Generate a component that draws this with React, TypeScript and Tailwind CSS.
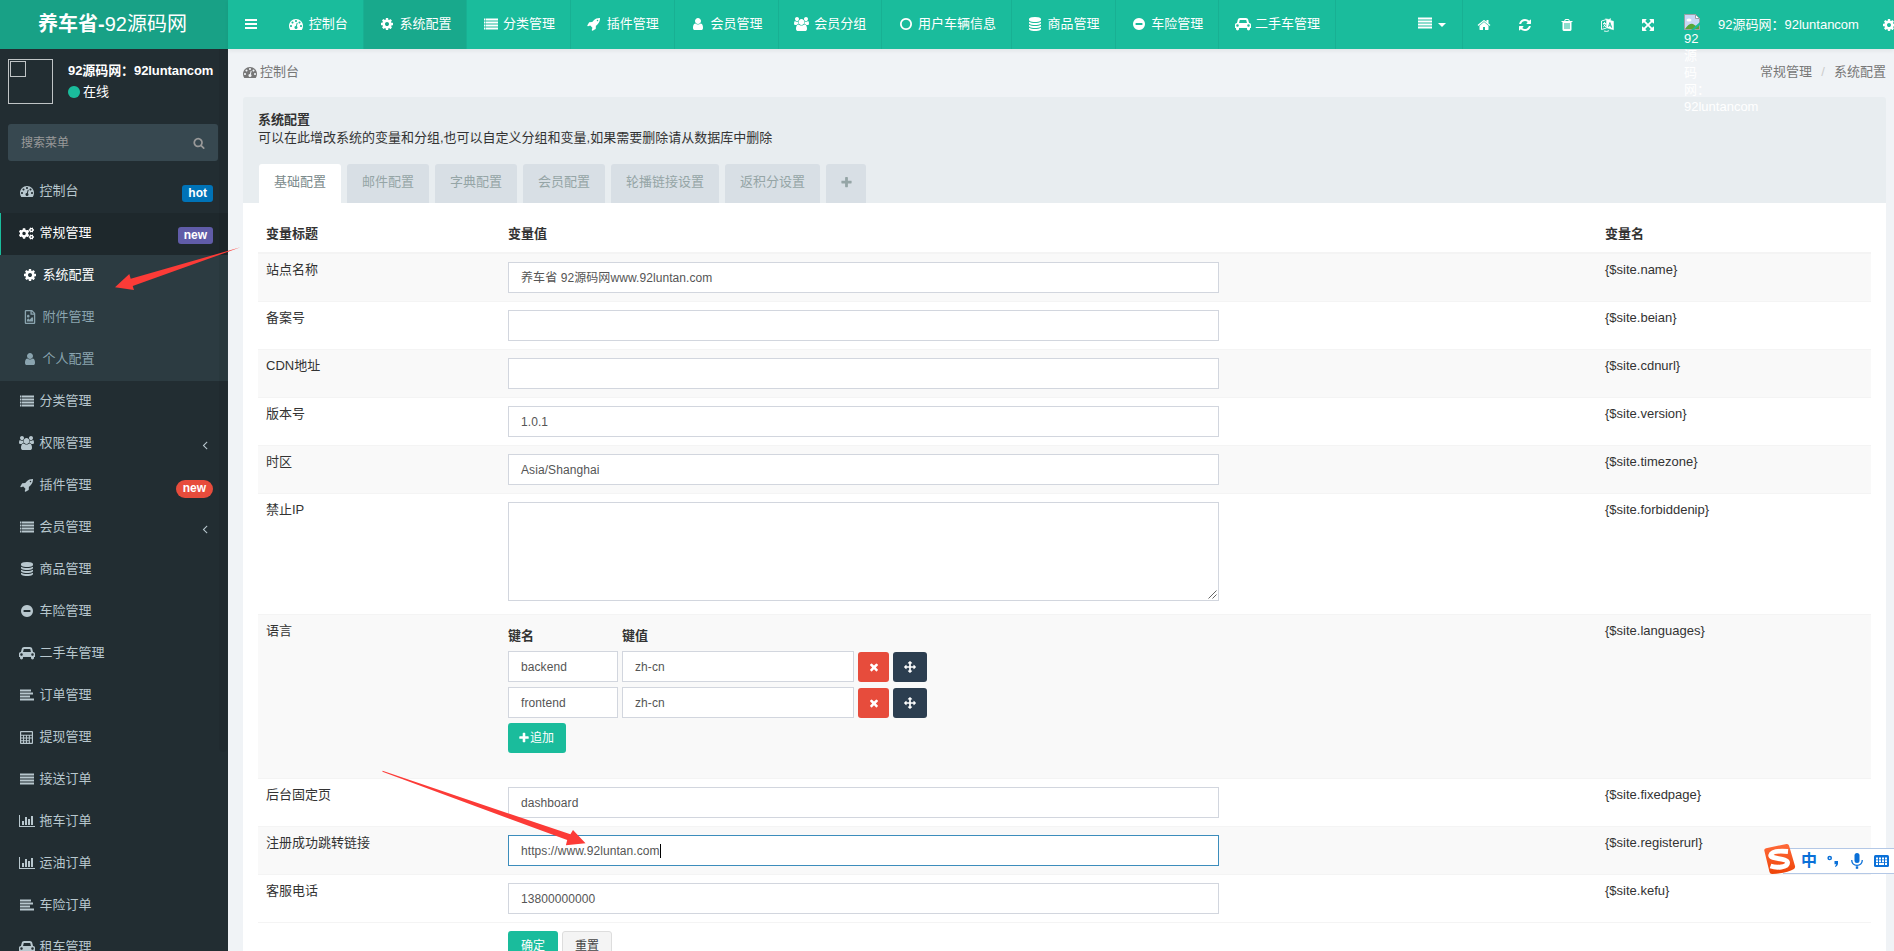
import React from "react";
import { FaCogs, FaRegFileImage } from "react-icons/fa";

const DOT = "q0-53-37.5-90.5t-90.5-37.5-90.5 37.5-37.5 90.5 37.5 90.5 90.5 37.5 90.5-37.5 37.5-90.5z";
const LAYER = "q237 0 443-43t325-127v170q0 69-103 128t-280 93.5-385 34.5-385-34.5-280-93.5-103-128v-170q119 84 325 127t443 43z";
const DISC = "q0 209-103 385.5t-279.5 279.5-385.5 103-385.5-103-279.5-279.5-103-385.5 103-385.5 279.5-279.5 385.5-103 385.5 103 279.5 279.5 103 385.5z";
const SLOT = "v-704q0-14-9-23t-23-9h-64q-14 0-23 9t-9 23v704q0 14 9 23t23 9h64q14 0 23-9t9-23z";

type Glyph = { d: string; x?: number; w?: number };

const glyphs: Record<string, Glyph> = {
  bars: { d: "M128 256h1536v256H128zM128 768h1536v256H128zM128 1280h1536v256H128z" },
  list: { d: "M0 192h192v256H0zM256 192h1536v256H256zM0 576h192v256H0zM256 576h1536v256H256zM0 960h192v256H0zM256 960h1536v256H256zM0 1344h192v256H0zM256 1344h1536v256H256z" },
  alignLeft: { d: "M0 192h1408v256H0zM0 576h1664v256H0zM0 960h1280v256H0zM0 1344h1792v256H0z" },
  alignJustify: { d: "M0 192h1792v256H0zM0 576h1792v256H0zM0 960h1792v256H0zM0 1344h1792v256H0z" },
  calculator: { d: "M128 0h1536q128 0 128 128v1536q0 128-128 128H128q-128 0-128-128V128Q0 0 128 0zM160 160v350h1472V160zM160 640v260h260V640zM560 640v260h260V640zM960 640v260h260V640zM1360 640v260h272V640zM160 1020v260h260v-260zM560 1020v260h260v-260zM960 1020v260h260v-260zM1360 1020v612h272v-612zM160 1400v232h260v-232zM560 1400v232h260v-232zM960 1400v232h260v-232z" },
  cog: { d: "M1152 896q0-106-75-181t-181-75-181 75-75 181 75 181 181 75 181-75 75-181zm512-109v222q0 12-8 23t-20 13l-185 28q-19 54-39 91 35 50 107 138 10 12 10 25t-9 23q-27 37-99 108t-94 71q-12 0-26-9l-138-108q-44 23-91 38-16 136-29 186-7 28-36 28h-222q-14 0-24.5-8.5t-11.5-21.5l-28-184q-49-16-90-37l-141 107q-10 9-25 9-14 0-25-11-126-114-165-168-7-10-7-23 0-12 8-23 15-21 51-66.5t54-70.5q-27-50-41-99l-183-27q-13-2-21-12.5t-8-23.5v-222q0-12 8-23t19-13l186-28q14-46 39-92-40-57-107-138-10-12-10-24 0-10 9-23 26-36 98.5-107.5t94.5-71.5q13 0 26 10l138 107q44-23 91-38 16-136 29-186 7-28 36-28h222q14 0 24.5 8.5t11.5 21.5l28 184q49 16 90 37l142-107q9-9 24-9 13 0 25 10 129 119 165 170 7 8 7 22 0 12-8 23-15 21-51 66.5t-54 70.5q26 50 41 98l183 28q13 2 21 12.5t8 23.5z" },
  user: { d: "M1536 1399q0 109-62.5 187t-150.5 78h-854q-88 0-150.5-78t-62.5-187q0-85 8.5-160.5t31.5-152 58.5-131 94-89 134.5-34.5q131 128 313 128t313-128q76 0 134.5 34.5t94 89 58.5 131 31.5 152 8.5 160.5zm-256-887q0 159-112.5 271.5t-271.5 112.5-271.5-112.5-112.5-271.5 112.5-271.5 271.5-112.5 271.5 112.5 112.5 271.5z" },
  users: { x: 64, w: 1920, d: "M657 896q-162 5-265 128h-134q-82 0-138-40.5t-56-118.5q0-353 124-353 6 0 43.5 21t97.5 42.5 119 21.5q67 0 133-23-5 37-5 66 0 139 81 256zm1071 637q0 120-73 189.5t-194 69.5h-874q-121 0-194-69.5t-73-189.5q0-53 3.5-103.5t14-109 26.5-108.5 43-97.5 62-81 85.5-53.5 111.5-20q10 0 43 21.5t73 48 107 48 135 21.5 135-21.5 107-48 73-48 43-21.5q61 0 111.5 20t85.5 53.5 62 81 43 97.5 26.5 108.5 14 109 3.5 103.5zm-1024-1277q0 106-75 181t-181 75-181-75-75-181 75-181 181-75 181 75 75 181zm704 384q0 159-112.5 271.5t-271.5 112.5-271.5-112.5-112.5-271.5 112.5-271.5 271.5-112.5 271.5 112.5 112.5 271.5zm576 225q0 78-56 118.5t-138 40.5h-134q-103-123-265-128 81-117 81-256 0-29-5-66 66 23 133 23 59 0 119-21.5t97.5-42.5 43.5-21q124 0 124 353zm-128-609q0 106-75 181t-181 75-181-75-75-181 75-181 181-75 181 75 75 181z" },
  dashboard: { d: "M384 1152" + DOT + "m192-448" + DOT + "m428 481l101-382q6-26-7.5-48.5t-38.5-29.5-48 6.5-30 39.5l-101 382q-60 5-107 43.5t-63 98.5q-20 77 20 146t117 89 146-20 89-117q16-60-6-117t-72-91zm660-33" + DOT + "m-640-640" + DOT + "m448 192" + DOT + "m320 448q0 261-141 483-19 29-54 29h-1402q-35 0-54-29-141-221-141-483 0-182 71-348t191-286 286-191 348-71 348 71 286 191 191 286 71 348z" },
  home: { d: "M1472 992v480q0 26-19 45t-45 19h-384v-384h-256v384h-384q-26 0-45-19t-19-45v-480q0-1 .5-3t.5-3l575-474 575 474q1 2 1 6zm223-69l-62 74q-8 9-21 11h-3q-13 0-21-7l-692-577-692 577q-12 8-24 7-13-2-21-11l-62-74q-8-10-7-23.5t11-21.5l719-599q32-26 76-26t76 26l244 204v-195q0-14 9-23t23-9h192q14 0 23 9t9 23v408l219 182q10 8 11 21.5t-7 23.5z" },
  trash: { d: "M704 1376" + SLOT + "m256 0" + SLOT + "m256 0" + SLOT + "m-544-992h448l-48-117q-7-9-17-11h-317q-10 2-17 11zm928 32v64q0 14-9 23t-23 9h-96v948q0 83-47 143.5t-113 60.5h-832q-66 0-113-58.5t-47-141.5v-952h-96q-14 0-23-9t-9-23v-64q0-14 9-23t23-9h309l70-167q15-37 54-63t79-26h320q40 0 79 26t54 63l70 167h309q14 0 23 9t9 23z" },
  refresh: { d: "M1639 1056q0 5-1 7-64 268-268 434.5t-478 166.5q-146 0-282.5-55t-243.5-157l-129 129q-19 19-45 19t-45-19-19-45v-448q0-26 19-45t45-19h448q26 0 45 19t19 45-19 45l-137 137q71 66 161 102t187 36q134 0 250-65t186-179q11-17 53-117 8-23 30-23h192q13 0 22.5 9.5t9.5 22.5zm25-800v448q0 26-19 45t-45 19h-448q-26 0-45-19t-19-45 19-45l138-138q-148-137-349-137-134 0-250 65t-186 179q-11 17-53 117-8 23-30 23h-199q-13 0-22.5-9.5t-9.5-22.5v-7q65-268 270-434.5t480-166.5q146 0 284 55.5t245 156.5l130-129q19-19 45-19t45 19 19 45z" },
  expand: { d: "M1411 541l-355 355 355 355 144-144q29-31 70-14 39 17 39 59v448q0 26-19 45t-45 19h-448q-42 0-59-40-17-39 14-69l144-144-355-355-355 355 144 144q31 30 14 69-17 40-59 40h-448q-26 0-45-19t-19-45v-448q0-42 40-59 39-17 69 14l144 144 355-355-355-355-144 144q-19 19-45 19-12 0-24-5-40-17-40-59v-448q0-26 19-45t45-19h448q42 0 59 40 17 39-14 69l-144 144 355 355 355-355-144-144q-31-30-14-69 17-40 59-40h448q26 0 45 19t19 45v448q0 42-39 59-13 5-25 5-26 0-45-19z" },
  move: { d: "M1792 896q0 26-19 45l-256 256q-19 19-45 19t-45-19-19-45v-128h-384v384h128q26 0 45 19t19 45-19 45l-256 256q-19 19-45 19t-45-19l-256-256q-19-19-19-45t19-45 45-19h128v-384h-384v128q0 26-19 45t-45 19-45-19l-256-256q-19-19-19-45t19-45l256-256q19-19 45-19t45 19 19 45v128h384v-384h-128q-26 0-45-19t-19-45 19-45l256-256q19-19 45-19t45 19l256 256q19 19 19 45t-19 45-45 19h-128v384h384v-128q0-26 19-45t45-19 45 19l256 256q19 19 19 45z" },
  times: { d: "M1490 1322q0 40-28 68l-136 136q-28 28-68 28t-68-28l-294-294-294 294q-28 28-68 28t-68-28l-136-136q-28-28-28-68t28-68l294-294-294-294q-28-28-28-68t28-68l136-136q28-28 68-28t68 28l294 294 294-294q28-28 68-28t68 28l136 136q28 28 28 68t-28 68l-294 294 294 294q28 28 28 68z" },
  plus: { d: "M1600 736v192q0 40-28 68t-68 28h-416v416q0 40-28 68t-68 28h-192q-40 0-68-28t-28-68v-416h-416q-40 0-68-28t-28-68v-192q0-40 28-68t68-28h416v-416q0-40 28-68t68-28h192q40 0 68 28t28 68v416h416q40 0 68 28t28 68z" },
  search: { d: "M1216 832q0-185-131.5-316.5t-316.5-131.5-316.5 131.5-131.5 316.5 131.5 316.5 316.5 131.5 316.5-131.5 131.5-316.5zm512 832q0 52-38 90t-90 38q-54 0-90-38l-343-342q-179 124-399 124-143 0-273.5-55.5t-225-150-150-225-55.5-273.5 55.5-273.5 150-225 225-150 273.5-55.5 273.5 55.5 225 150 150 225 55.5 273.5q0 220-124 399l343 343q37 37 37 90z" },
  minus: { d: "M1344 960v-128q0-26-19-45t-45-19h-768q-26 0-45 19t-19 45v128q0 26 19 45t45 19h768q26 0 45-19t19-45zm320-64" + DISC },
  circleO: { d: "M896 352q-148 0-273 73t-198 198-73 273 73 273 198 198 273 73 273-73 198-198 73-273-73-273-198-198-273-73zm768 544" + DISC },
  circle: { d: "M1664 896" + DISC },
  database: { d: "M896 768" + LAYER + "m0 768" + LAYER + "m0-384" + LAYER + "m0-1152q208 0 385 34.5t280 93.5 103 128v128q0 69-103 128t-280 93.5-385 34.5-385-34.5-280-93.5-103-128v-128q0-69 103-128t280-93.5 385-34.5z" },
  rocket: { d: "M1440 448q0-40-28-68t-68-28-68 28-28 68 28 68 68 28 68-28 28-68zm224-288q0 249-75.5 430.5t-253.5 360.5q-81 80-195 176l-20 379q-2 16-16 26l-384 224q-7 4-16 4-12 0-23-9l-64-64q-13-14-8-32l85-276-281-281-276 85q-3 1-9 1-14 0-23-9l-64-64q-17-19-5-39l224-384q10-14 26-16l379-20q96-114 176-195 188-187 358-258t431-71q14 0 24 9.5t10 22.5z" },
  car: { w: 2048, d: "M480 1088q0-66-47-113t-113-47-113 47-47 113 47 113 113 47 113-47 47-113zm36-320h1016l-89-357q-2-8-14-17.5t-21-9.5h-768q-9 0-21 9.5t-14 17.5zm1372 320q0-66-47-113t-113-47-113 47-47 113 47 113 113 47 113-47 47-113zm160-96v384q0 14-9 23t-23 9h-96v128q0 80-56 136t-136 56-136-56-56-136v-128h-1024v128q0 80-56 136t-136 56-136-56-56-136v-128h-96q-14 0-23-9t-9-23v-384q0-93 65.5-158.5t158.5-65.5h28l105-419q23-94 104-157.5t179-63.5h768q98 0 179 63.5t104 157.5l105 419h28q93 0 158.5 65.5t65.5 158.5z" },
  chart: { w: 2048, d: "M640 896v512h-256v-512h256zm384-512v1024h-256v-1024h256zm1024 1152v128h-2048v-1536h128v1408h1920zm-640-896v768h-256v-768h256zm384-384v1152h-256v-1152h256z" },
  angle: { d: "M1203 544q0 13-10 23l-393 393 393 393q10 10 10 23t-10 23l-50 50q-10 10-23 10t-23-10l-466-466q-10-10-10-23t10-23l466-466q10-10 23-10t23 10l50 50q10 10 10 23z" },
};

function Icon({ name, size = 14, className = "" }: { name: string; size?: number; className?: string }) {
  if (name === "cogs") return <FaCogs size={size + 1} className={"shrink-0 " + className} />;
  if (name === "image") return <FaRegFileImage size={size} className={"shrink-0 " + className} />;
  const g = glyphs[name];
  const w = g.w ?? 1792;
  return (
    <svg
      width={(size * w) / 1792}
      height={size}
      viewBox={`${g.x ?? 0} 0 ${w} 1792`}
      fill="currentColor"
      fillRule={name === "calculator" ? "evenodd" : "nonzero"}
      className={"shrink-0 " + className}
    >
      <path d={g.d} />
    </svg>
  );
}

const navItems = [
  { icon: "dashboard", label: "控制台" },
  { icon: "cog", label: "系统配置", active: true },
  { icon: "list", label: "分类管理" },
  { icon: "rocket", label: "插件管理" },
  { icon: "user", label: "会员管理" },
  { icon: "users", label: "会员分组" },
  { icon: "circleO", label: "用户车辆信息" },
  { icon: "database", label: "商品管理" },
  { icon: "minus", label: "车险管理" },
  { icon: "car", label: "二手车管理" },
];

const subMenu = [
  { icon: "cog", label: "系统配置", active: true },
  { icon: "image", label: "附件管理" },
  { icon: "user", label: "个人配置" },
];

const menu: { icon: string; label: string; arrow?: boolean; badge?: boolean }[] = [
  { icon: "list", label: "分类管理" },
  { icon: "users", label: "权限管理", arrow: true },
  { icon: "rocket", label: "插件管理", badge: true },
  { icon: "list", label: "会员管理", arrow: true },
  { icon: "database", label: "商品管理" },
  { icon: "minus", label: "车险管理" },
  { icon: "car", label: "二手车管理" },
  { icon: "alignLeft", label: "订单管理" },
  { icon: "calculator", label: "提现管理" },
  { icon: "alignJustify", label: "接送订单" },
  { icon: "chart", label: "拖车订单" },
  { icon: "chart", label: "运油订单" },
  { icon: "alignLeft", label: "车险订单" },
  { icon: "car", label: "租车管理" },
];

const tabs = ["基础配置", "邮件配置", "字典配置", "会员配置", "轮播链接设置", "返积分设置"];

function MenuLabel({ icon, label }: { icon: string; label: string }) {
  return (
    <>
      <span className="flex w-5 justify-center">
        <Icon name={icon} size={icon === "calculator" ? 13 : 14} />
      </span>
      <span className="ml-[3px]">{label}</span>
    </>
  );
}

function Sidebar() {
  return (
    <aside className="relative flex w-[228px] shrink-0 flex-col bg-[#222d32] text-[#b8c7ce]">
      <div className="flex h-[49px] shrink-0 items-center justify-center bg-[#18a186] pb-px pr-[3px] text-xl text-white">
        <b>养车省-</b>92源码网
      </div>
      <div className="flex h-[75px] shrink-0 pl-2 pt-[10px] text-white">
        <div className="h-[45px] w-[45px] border border-[#c0c4c6] p-px">
          <div className="h-4 w-4 border border-[#c0c4c6]" />
        </div>
        <div className="ml-[15px] flex flex-col whitespace-nowrap">
          <div className="mt-px h-[21px] text-[13px] font-bold leading-[21px] tracking-[-0.08px]">92源码网：92luntancom</div>
          <div className="flex h-[22px] items-center gap-[2px]">
            <Icon name="circle" className="-ml-px text-[#1abc9c]" />
            <span>在线</span>
          </div>
        </div>
      </div>
      <div className="ml-2 flex h-[37px] w-[210px] shrink-0 items-center justify-between rounded-[3px] bg-[#374850] pl-[13px] pr-[13px] text-xs text-[#999]">
        <span>搜索菜单</span>
        <Icon name="search" size={12} />
      </div>
      <div className="mt-[10px] flex h-[42px] shrink-0 items-center pb-[2px] pl-[16.5px] pr-[15px]">
        <MenuLabel icon="dashboard" label="控制台" />
        <span className="ml-auto mt-[5px] h-[17px] rounded-[3px] bg-[#0073b7] px-1.5 text-xs font-bold leading-4 text-white">hot</span>
      </div>
      <div className="flex h-[42px] shrink-0 items-center border-l border-[#1abc9c] bg-[#1e282c] pb-[2px] pl-[15.5px] pr-[15px] text-white">
        <MenuLabel icon="cogs" label="常规管理" />
        <span className="ml-auto mt-[5px] h-[17px] rounded-[3px] bg-[#605ca8] px-1.5 text-xs font-bold leading-4 text-white">new</span>
      </div>
      <div className="shrink-0 bg-[#2c3b41]">
        {subMenu.map((m) => (
          <div key={m.label} className={"flex h-[42px] items-center pb-[2px] pl-[19.5px] " + (m.active ? "text-white" : "text-[#8aa4af]")}>
            <MenuLabel icon={m.icon} label={m.label} />
          </div>
        ))}
      </div>
      {menu.map((m, i) => (
        <div key={i} className="flex h-[42px] shrink-0 items-center pb-[2px] pl-[16.5px] pr-[15px]">
          <MenuLabel icon={m.icon} label={m.label} />
          {m.arrow && <Icon name="angle" size={14} className="ml-auto mr-px mt-[3px]" />}
          {m.badge && (
            <span className="ml-auto mt-[7px] h-[18px] rounded-full bg-[#e74c3c] px-[7px] text-xs font-bold leading-[17px] text-white">new</span>
          )}
        </div>
      ))}
      <div className="absolute left-[219px] top-[49px] h-[703px] w-2 rounded-b bg-black/5" />
    </aside>
  );
}

function BrokenImage() {
  return (
    <svg width="16" height="16" viewBox="0 0 16 16">
      <path d="M.5.5h11l4 4v11H.5z" fill="#c9d8f5" stroke="#9aa0a6" />
      <path d="M11.5.5v4h4z" fill="#fff" stroke="#9aa0a6" />
      <ellipse cx="5" cy="6" rx="2.5" ry="1.5" fill="#fff" />
      <path d="M1 15q4-6 8-5l3 2 3-1v4z" fill="#5aa637" />
      <path d="M16 8L7 16h3l6-5z" fill="#1abc9c" />
    </svg>
  );
}

function TopBar() {
  return (
    <header className="relative z-10 flex h-[49px] shrink-0 items-stretch overflow-visible bg-[#1abc9c] text-white shadow-[0_2px_4px_rgba(0,0,0,0.06)]">
      <div className="flex w-[45px] shrink-0 items-center justify-center pb-[2px]">
        <Icon name="bars" size={14} />
      </div>
      {navItems.map((n) => (
        <div
          key={n.label}
          className={
            "flex shrink-0 items-center whitespace-nowrap border-r border-[#18b093] px-[15px] pb-[2px] " +
            (n.active ? "bg-[#18a98c]" : "")
          }
        >
          <span className="mr-1 flex w-[16.7px] justify-center">
            <Icon name={n.icon} />
          </span>
          {n.label}
        </div>
      ))}
      <div className="ml-auto flex w-[558px] shrink-0 overflow-hidden">
        <div className="flex w-[127px] shrink-0 items-center justify-end gap-[6px] border-r border-[#18b093] pb-[3px] pr-[16px]">
          <Icon name="alignJustify" size={14} />
          <svg width="8" height="4" viewBox="0 0 8 4" className="mt-1" fill="currentColor">
            <path d="M0 0h8L4 4z" />
          </svg>
        </div>
        <div className="flex shrink-0 items-center">
          <span className="flex w-[41px] justify-center"><Icon name="home" /></span>
          <span className="flex w-[42px] justify-center"><Icon name="refresh" /></span>
          <span className="flex w-[41px] justify-center"><Icon name="trash" /></span>
          <span className="flex w-[40px] justify-center">
            <svg width="13" height="14" viewBox="0 0 13 14" fill="none" stroke="currentColor">
              <path d="M5.500 1.500L.5 3v8.500l5-1.500M2 5.500h3M3.500 4v1.500M2.200 9q2-1 2.300-3.200M2.500 6.500L5 9M3 13q3 1 5-.3" strokeWidth=".9" />
              <path d="M5.500 1.800L4.500.8l3.500.7 1.500-1v2l3 .8v8.500l-7-2z" fill="currentColor" strokeWidth=".5" />
              <path d="M7.500 8.800l1.400-4.300 1.800 5.200M8.200 7.500l2 .6" stroke="#1abc9c" strokeWidth=".9" />
            </svg>
          </span>
          <span className="flex w-[42px] justify-center"><Icon name="expand" /></span>
        </div>
        <div className="ml-[49px] flex shrink-0 items-center">92源码网：92luntancom</div>
        <div className="ml-[23px] flex shrink-0 items-center"><Icon name="cog" /></div>
      </div>
      <div className="absolute left-[1456px] top-[14px] w-[80px] text-[13px] leading-[17px]">
        <BrokenImage />
        <div>92<br />源<br />码<br />网：<br />92luntancom</div>
      </div>
    </header>
  );
}

function Field({ value = "", className = "w-[711px] border-[#d2d6de]", caret = false }: { value?: string; className?: string; caret?: boolean }) {
  return (
    <div className={"flex h-[31px] shrink-0 items-center border bg-white pl-3 pt-px text-xs tracking-[0.08px] text-[#555] " + className}>
      {value}
      {caret && <span className="h-[14px] w-px bg-black" />}
    </div>
  );
}

function Row({ label, name, children, striped, height = "h-12" }: { label: string; name: string; children: React.ReactNode; striped?: boolean; height?: string }) {
  return (
    <div className={"flex shrink-0 border-b border-[#f4f4f4] pt-2 leading-[18px] " + height + (striped ? " bg-[#f9f9f9]" : "")}>
      <div className="-mt-px w-[250px] shrink-0 pl-2">{label}</div>
      <div className="w-[1097px] shrink-0">{children}</div>
      <div className="-mt-px">{name}</div>
    </div>
  );
}

function PairRow({ k }: { k: string }) {
  return (
    <div className="mb-[5px] flex items-end gap-1">
      <Field value={k} className="w-[110px] border-[#d2d6de]" />
      <Field value="zh-cn" className="w-[232px] border-[#d2d6de]" />
      <div className="flex h-[30px] w-[31px] items-center justify-center rounded-[3px] bg-[#e74c3c] text-white"><Icon name="times" size={12} /></div>
      <div className="flex h-[30px] w-[34px] items-center justify-center rounded-[3px] bg-[#2c3e50] text-white"><Icon name="move" size={12} /></div>
    </div>
  );
}

function Panel() {
  return (
    <section className="ml-[15px] flex w-[1643px] shrink-0 flex-col">
      <div className="flex h-[106px] shrink-0 flex-col rounded-t-[3px] bg-[#e8edf0] pl-[15px] pt-[14px]">
        <div className="h-[18px] font-bold leading-[18px]">系统配置</div>
        <div className="h-[18px] leading-[18px]">可以在此增改系统的变量和分组,也可以自定义分组和变量,如果需要删除请从数据库中删除</div>
        <div className="mt-[17px] flex h-[39px] gap-1.5 pl-px">
          {tabs.map((t, i) => (
            <div
              key={t}
              className={
                "flex items-center rounded-t-[3px] px-[15px] pb-[3px] " +
                (i === 0 ? "bg-white text-[#7b8a8b]" : "bg-[#d8dfe5] text-[#95a5a6]")
              }
            >
              {t}
            </div>
          ))}
          <div className="flex w-10 items-center justify-center rounded-t-[3px] bg-[#d8dfe5] pb-[3px] text-[#95a5a6]"><Icon name="plus" size={13} /></div>
        </div>
      </div>
      <div className="flex h-[760px] flex-col bg-white px-[15px] pt-[15px]">
        <div className="flex h-9 shrink-0 border-b-2 border-[#f4f4f4] pt-[7px] font-bold leading-[18px]">
          <div className="w-[250px] pl-2">变量标题</div>
          <div className="w-[1097px]">变量值</div>
          <div>变量名</div>
        </div>
        <Row label="站点名称" name="{$site.name}" striped><Field value="养车省 92源码网www.92luntan.com" /></Row>
        <Row label="备案号" name="{$site.beian}"><Field /></Row>
        <Row label="CDN地址" name="{$site.cdnurl}" striped><Field /></Row>
        <Row label="版本号" name="{$site.version}"><Field value="1.0.1" /></Row>
        <Row label="时区" name="{$site.timezone}" striped><Field value="Asia/Shanghai" /></Row>
        <Row label="禁止IP" name="{$site.forbiddenip}" height="h-[121px]">
          <div className="flex h-[99px] w-[711px] items-end justify-end border border-[#d2d6de] bg-white p-px">
            <svg width="9" height="9" viewBox="0 0 9 9" stroke="#555" strokeWidth=".9"><path d="M.5 8.500l8-8M4.500 8.500l4-4" /></svg>
          </div>
        </Row>
        <Row label="语言" name="{$site.languages}" height="h-[164px]" striped>
          <div className="mt-1 flex h-6 font-bold leading-[18px]">
            <div className="w-[114px]">键名</div>
            <div>键值</div>
          </div>
          <PairRow k="backend" />
          <PairRow k="frontend" />
          <div className="flex h-[30px] w-[58px] items-center justify-center rounded-[3px] bg-[#1abc9c] pr-0.5 text-xs text-white">
            <Icon name="plus" size={12} />追加
          </div>
        </Row>
        <Row label="后台固定页" name="{$site.fixedpage}"><Field value="dashboard" /></Row>
        <Row label="注册成功跳转链接" name="{$site.registerurl}" striped>
          <Field value="https://www.92luntan.com" className="w-[711px] border-[#3c8dbc]" caret />
        </Row>
        <Row label="客服电话" name="{$site.kefu}"><Field value="13800000000" /></Row>
        <div className="flex gap-1 pl-[250px] pt-2 text-xs">
          <div className="flex h-[30px] w-[50px] items-center justify-center rounded-[3px] bg-[#1abc9c] text-white">确定</div>
          <div className="flex h-[30px] w-[50px] items-center justify-center rounded-[3px] border border-[#ddd] bg-[#f4f4f4] text-[#444]">重置</div>
        </div>
      </div>
    </section>
  );
}

function InputMethodBar() {
  return (
    <div className="absolute left-[1763px] top-[843px] z-20 h-8 w-[131px]">
      <div className="absolute left-5 right-0 top-[5px] flex h-[26px] items-center border-y border-[#b4c8e6] bg-white pl-[18px] text-[#0a70d8]">
        <span className="w-[26px] text-[16px] font-bold leading-none">中</span>
        <svg width="12" height="12" viewBox="0 0 12 12" className="mr-[12px] shrink-0">
          <circle cx="2.700" cy="3" r="1.600" fill="none" stroke="currentColor" strokeWidth="1.500" />
          <path d="M7.500 6h3.500v3q-.5 2.500-3 3v-1q1.200-.6 1.200-1.800H7.500z" fill="currentColor" />
        </svg>
        <svg width="12" height="16" viewBox="0 0 12 16" className="mr-[11px] shrink-0" fill="currentColor">
          <rect x="3.500" y="0" width="5" height="10" rx="2.500" />
          <path d="M.8 7v1q.5 4 5.200 4.300 4.700-.3 5.200-4.300V7" fill="none" stroke="currentColor" strokeWidth="1.300" />
          <rect x="4.800" y="13.300" width="2.400" height="2.500" />
        </svg>
        <svg width="15" height="12" viewBox="0 0 15 12" className="shrink-0">
          <rect width="15" height="12" rx="1.500" fill="currentColor" />
          <path d="M2 2.500h2v2H2zM5 2.500h2v2H5zM8 2.500h2v2H8zM11 2.500h2v2h-2zM2 5.200h2v2H2zM5 5.200h2v2H5zM8 5.200h2v2H8zM11 5.200h2v2h-2zM2 8h2v2H2zM5 8h5v2H5zM11 8h2v2h-2z" fill="#fff" />
        </svg>
      </div>
      <svg width="34" height="32" viewBox="0 0 34 32" className="absolute left-0 top-0">
        <defs>
          <linearGradient id="brand" x1="0" y1="0" x2="0" y2="1">
            <stop offset="0" stopColor="#ff6a3a" />
            <stop offset="1" stopColor="#ee4408" />
          </linearGradient>
        </defs>
        <path d="M1.300 7.500Q1 5.800 3 5.300L23.500 1q2-.3 2.500 1.500l6 20.500q.5 2-1.500 3.300Q25 30 9 31q-2 0-2.500-2z" fill="url(#brand)" />
        <path d="M25 8.500Q9 7 7.800 12.300c-.6 4 16.700 2.700 16.700 7.400 0 4.800-11 5.300-17 3.300" fill="none" stroke="#fff" strokeWidth="5" />
      </svg>
    </div>
  );
}

export default function App() {
  return (
    <div className="relative flex h-[951px] w-[1894px] overflow-hidden bg-[#f0f3f6] font-['Liberation_Sans','Noto_Sans_CJK_SC',sans-serif] text-[13px] leading-[18px] text-[#333]">
      <Sidebar />
      <main className="flex min-w-0 flex-1 flex-col">
        <TopBar />
        <div className="flex h-12 shrink-0 items-center justify-between pb-[2px] pl-[15px] pr-2 text-[#777]">
          <div className="flex items-center gap-[3px]">
            <Icon name="dashboard" />
            控制台
          </div>
          <div className="flex">
            常规管理<span className="w-[22px] text-center text-[#ccc]">/</span>系统配置
          </div>
        </div>
        <Panel />
      </main>
      <svg className="pointer-events-none absolute left-0 top-0 z-20" width="1894" height="951" fill="#fc3b37">
        <path d="M115 287.300L129.300 274l1.400 4.700L240.500 247.300 132.700 286l1.300 4z" />
        <path d="M382.500 770.800l187.900 63.500L573 830l12.500 13.300-19.600 2 1.300-5.300L382.500 771.800z" />
      </svg>
      <InputMethodBar />
    </div>
  );
}
